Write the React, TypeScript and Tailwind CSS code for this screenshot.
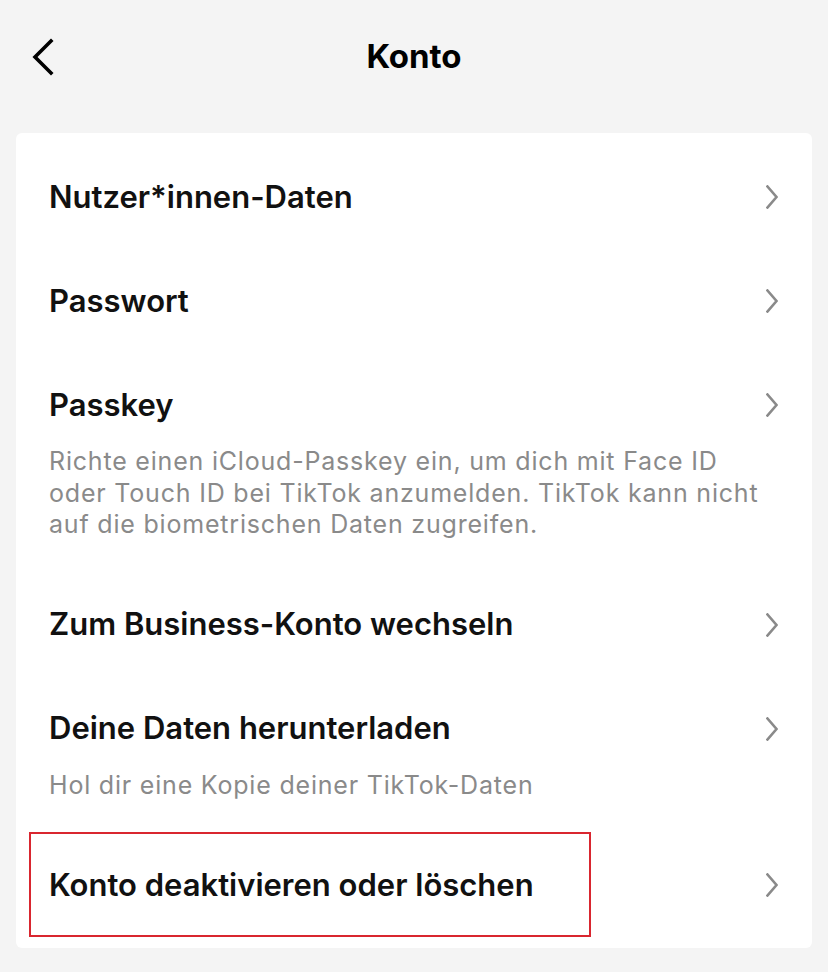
import React from "react";

type Item = {
  title: string;
  desc?: string;
  highlight?: boolean;
};

const items: Item[] = [
  { title: "Nutzer*innen-Daten" },
  { title: "Passwort" },
  {
    title: "Passkey",
    desc: "Richte einen iCloud-Passkey ein, um dich mit Face ID oder Touch ID bei TikTok anzumelden. TikTok kann nicht auf die biometrischen Daten zugreifen.",
  },
  { title: "Zum Business-Konto wechseln" },
  { title: "Deine Daten herunterladen", desc: "Hol dir eine Kopie deiner TikTok-Daten" },
  { title: "Konto deaktivieren oder löschen", highlight: true },
];

function Chevron() {
  return (
    <svg width="12" height="24" viewBox="0 0 12 24" fill="none" className="shrink-0">
      <path d="M1.5 1.5 L10.5 12 L1.5 22.5" stroke="#8a8a8a" strokeWidth="2.6" strokeLinecap="square" strokeLinejoin="miter" />
    </svg>
  );
}

function Row({ item }: { item: Item }) {
  return (
    <div className="relative pl-[33px] pr-[34px] py-8 cursor-pointer">
      <div className="flex items-center justify-between h-10">
        <span className="text-[31px] font-semibold text-[#111]">{item.title}</span>
        <Chevron />
      </div>
      {item.desc && (
        <p className="mt-[21px] max-w-[726px] text-[25px] leading-[31.5px] tracking-[0.8px] text-[#8a8a8a]">{item.desc}</p>
      )}
      {/* annotation box */}
      {item.highlight && (
        <div className="absolute left-[13px] top-[-1px] w-[562px] h-[105px] border-2 border-[#d9262f] pointer-events-none" />
      )}
    </div>
  );
}

export default function App() {
  return (
    <div className="w-[828px] h-[972px] bg-[#f4f4f4] overflow-hidden" style={{ fontFamily: "Inter, 'Noto Sans', sans-serif" }}>
      {/* Header */}
      <div className="relative h-[114px] flex items-center justify-center">
        <button className="absolute left-[31px] top-[38px] p-0">
          <svg width="24" height="38" viewBox="0 0 24 38" fill="none">
            <path d="M20 3 L4 19 L20 35" stroke="#000" strokeWidth="3.6" strokeLinecap="square" />
          </svg>
        </button>
        <h1 className="text-[33px] font-bold text-black">Konto</h1>
      </div>

      {/* Card */}
      <div className="mx-4 mt-[19px] bg-white rounded-md pt-3 pb-[11px]">
        {items.map((item) => (
          <Row key={item.title} item={item} />
        ))}
      </div>
    </div>
  );
}
